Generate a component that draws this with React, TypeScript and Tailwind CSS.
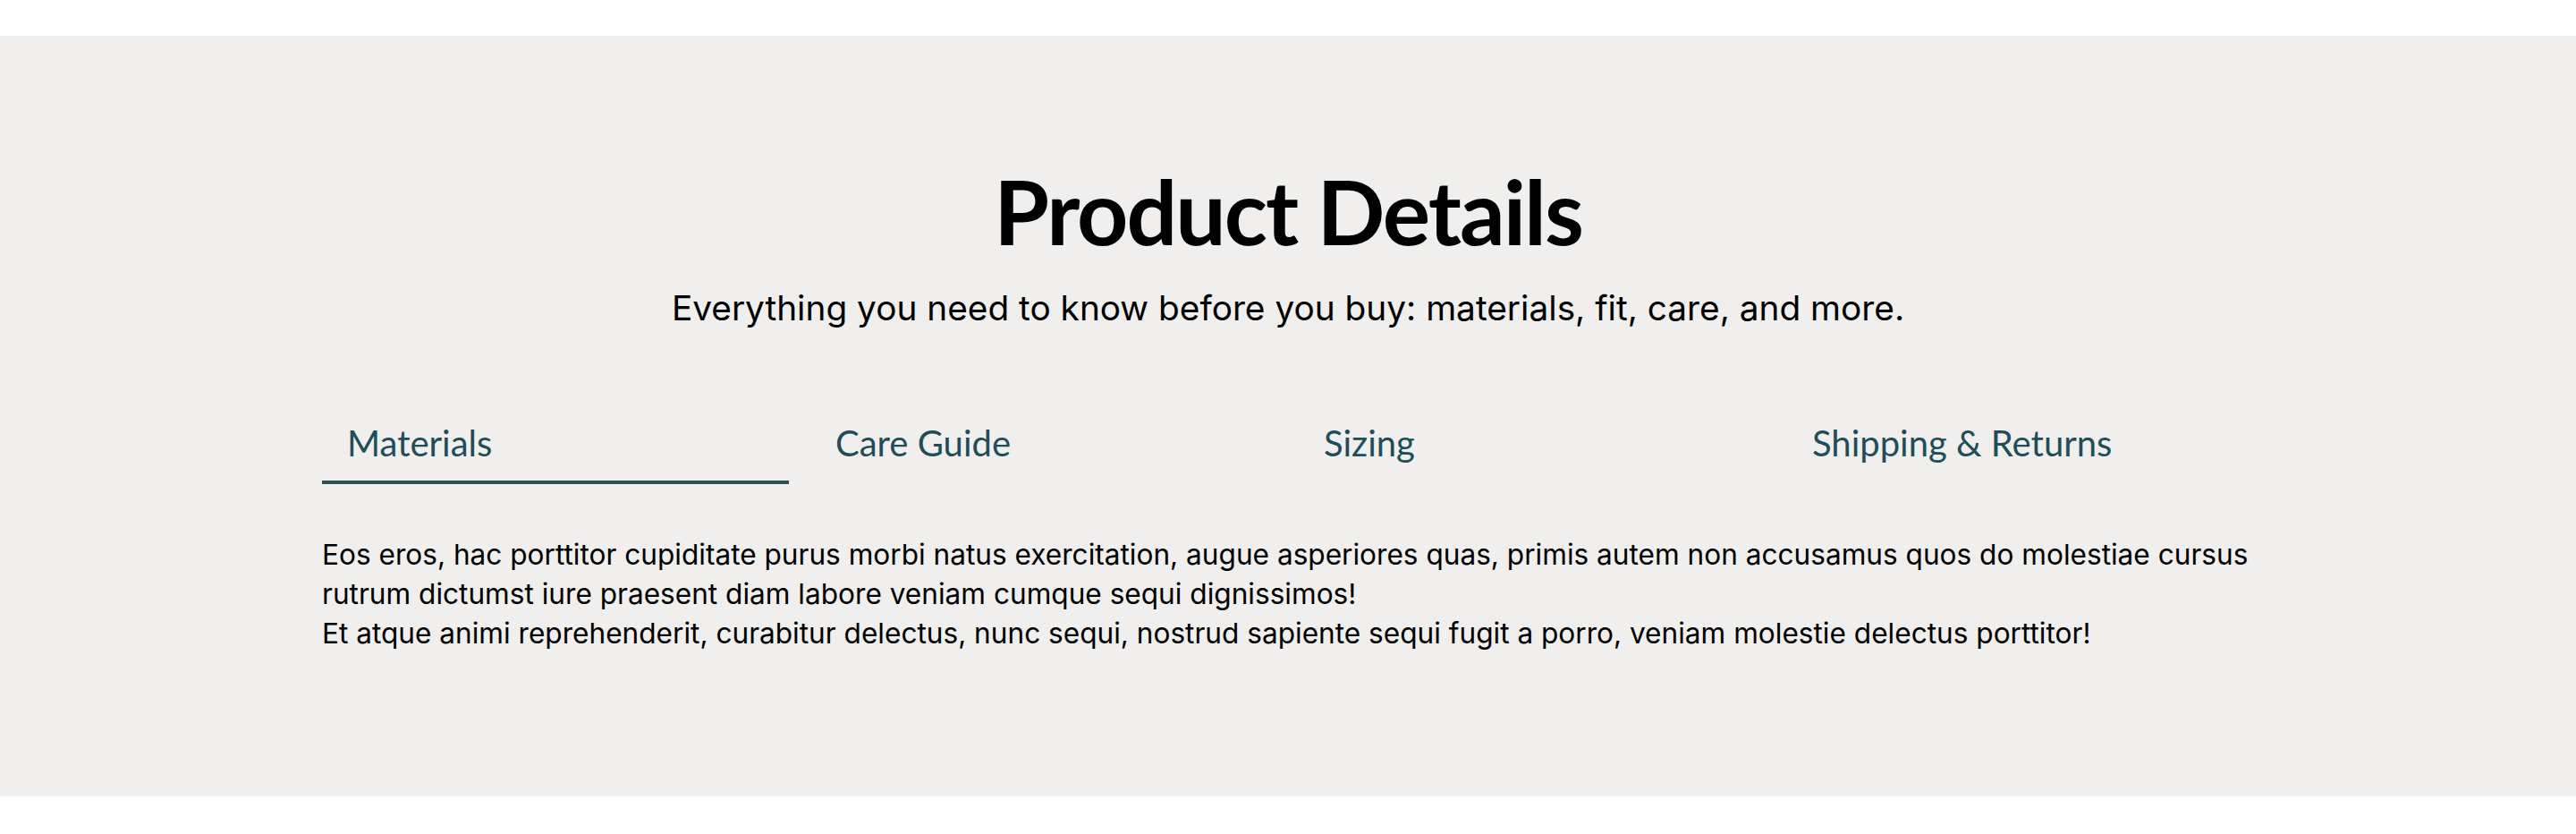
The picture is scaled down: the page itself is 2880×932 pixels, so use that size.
import React, { useState } from 'react';

const tabs = [
  {
    id: 'materials',
    label: 'Materials',
    body: [
      'Eos eros, hac porttitor cupiditate purus morbi natus exercitation, augue asperiores quas, primis autem non accusamus quos do molestiae cursus rutrum dictumst iure praesent diam labore veniam cumque sequi dignissimos!',
      'Et atque animi reprehenderit, curabitur delectus, nunc sequi, nostrud sapiente sequi fugit a porro, veniam molestie delectus porttitor!',
    ],
  },
  { id: 'care', label: 'Care Guide', body: ['Wash cold, hang to dry.'] },
  { id: 'sizing', label: 'Sizing', body: ['True to size.'] },
  { id: 'shipping', label: 'Shipping & Returns', body: ['Free returns within 30 days.'] },
];

export default function App() {
  const [active, setActive] = useState('materials');
  const current = tabs.find(t => t.id === active) ?? tabs[0];

  return (
    <div className="min-h-screen bg-white pt-10">
      <section className="bg-[#f0efed] pt-[140px] pb-[160px]">
        <div className="mx-auto w-[2160px]">
          <h2 className="text-center font-['Lato',sans-serif] text-[100px] font-bold leading-[1.1] tracking-[-0.02em] text-black">
            Product Details
          </h2>
          <p className="mt-[27px] text-center font-['Inter',sans-serif] text-[38.8px] leading-[1.4] text-black">
            Everything you need to know before you buy: materials, fit, care, and more.
          </p>

          <div className="mt-[98px] grid grid-cols-4 gap-6">
            {tabs.map(t => (
              <button
                key={t.id}
                onClick={() => setActive(t.id)}
                className={`px-7 pb-4 text-left font-['Lato',sans-serif] text-[40px] leading-[1.3] text-[#1f4d59] border-b-4 ${
                  t.id === active ? 'border-[#2a5058]' : 'border-transparent'
                }`}
              >
                {t.label}
              </button>
            ))}
          </div>

          <div className="mt-[57px] font-['Inter',sans-serif] text-[31.6px] leading-[44px] text-black">
            {current.body.map((line, i) => (
              <p key={i}>{line}</p>
            ))}
          </div>
        </div>
      </section>
    </div>
  );
}
